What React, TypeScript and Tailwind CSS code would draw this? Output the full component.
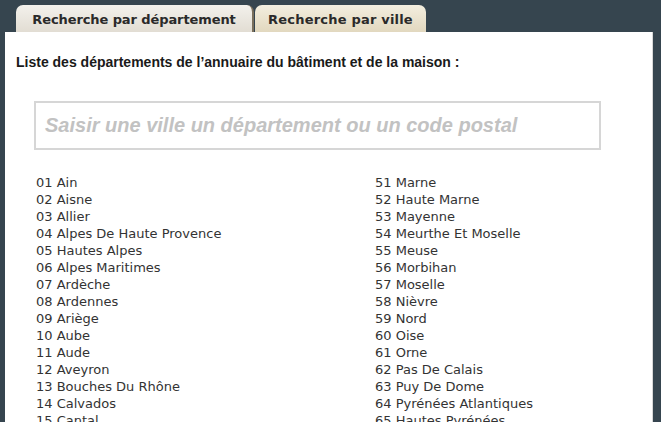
import React from "react";

const left = [
  "01 Ain", "02 Aisne", "03 Allier", "04 Alpes De Haute Provence", "05 Hautes Alpes",
  "06 Alpes Maritimes", "07 Ardèche", "08 Ardennes", "09 Ariège", "10 Aube", "11 Aude",
  "12 Aveyron", "13 Bouches Du Rhône", "14 Calvados", "15 Cantal",
];
const right = [
  "51 Marne", "52 Haute Marne", "53 Mayenne", "54 Meurthe Et Moselle", "55 Meuse",
  "56 Morbihan", "57 Moselle", "58 Nièvre", "59 Nord", "60 Oise", "61 Orne",
  "62 Pas De Calais", "63 Puy De Dome", "64 Pyrénées Atlantiques", "65 Hautes Pyrénées",
];

export default function App() {
  return (
    <div className="w-[661px] h-[422px] overflow-hidden bg-[#36454f] pt-[5px] pl-[5px] pr-[8px]">
      <div className="flex pl-[11px] h-[27px] items-end">
        <div className="h-[27px] w-[238px] rounded-t-[7px] bg-gradient-to-b from-[#f3f1ec] to-[#e2ddd3] border-r-[2px] border-[#7a6f5c] flex items-center justify-center text-[13px] font-bold text-[#2a2a2a] pt-[2px] [font-family:'DejaVu_Sans',sans-serif] tracking-[-0.1px]">
          Recherche par département
        </div>
        <div className="ml-[1px] h-[27px] w-[171px] rounded-t-[7px] bg-gradient-to-b from-[#f3eedf] to-[#e2d8bf] flex items-center justify-center text-[13px] font-bold text-[#2a2a2a] pt-[2px] [font-family:'DejaVu_Sans',sans-serif] tracking-[0.2px]">
          Recherche par ville
        </div>
      </div>
      <div className="bg-white h-[400px] border-r border-[#d8d8d8]">
        <div className="pt-[22px] pl-[11px] text-[14px] font-bold text-[#1a1a1a] [font-family:'Liberation_Sans',sans-serif] leading-[16px]">
          Liste des départements de l’annuaire du bâtiment et de la maison :
        </div>
        <div className="mt-[31px] ml-[29px] w-[567px] h-[49px] border-2 border-[#d6d6d6] flex items-center pl-[9px] pb-[2px]">
          <span className="text-[20px] font-bold italic text-[#c2c2c2] [font-family:'Liberation_Sans',sans-serif]">
            Saisir une ville un département ou un code postal
          </span>
        </div>
        <div className="mt-[24px] ml-[31px] grid grid-cols-[339px_1fr] text-[13px] leading-[17px] text-[#333] [font-family:'DejaVu_Sans',sans-serif]">
          <div className="flex flex-col">
            {left.map((t) => (
              <div key={t}>{t}</div>
            ))}
          </div>
          <div className="flex flex-col">
            {right.map((t) => (
              <div key={t}>{t}</div>
            ))}
          </div>
        </div>
      </div>
    </div>
  );
}
